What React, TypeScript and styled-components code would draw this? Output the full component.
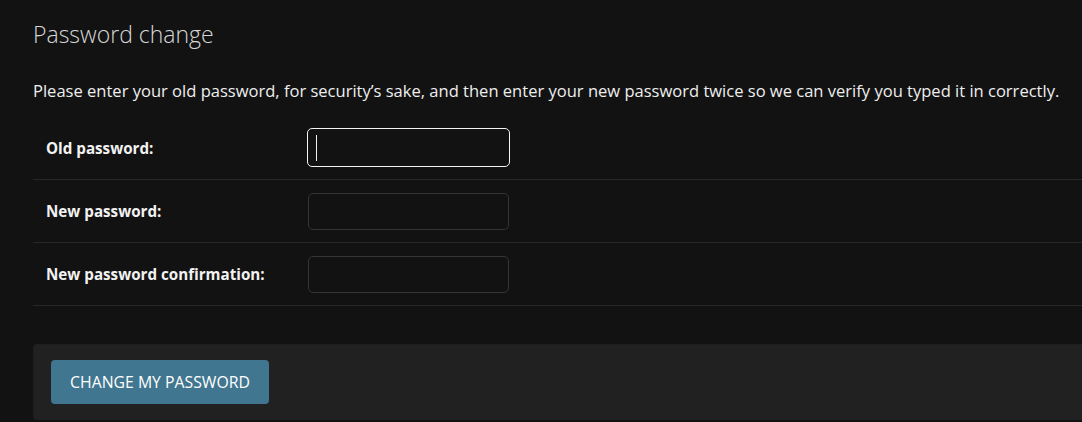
import React from "react";
import styled, { createGlobalStyle } from "styled-components";

const Global = createGlobalStyle`
  html, body { margin: 0; padding: 0; background: #121212; }
  body {
    font-family: "Open Sans", "Noto Sans", "Liberation Sans", sans-serif;
    color: #eeeeee;
    overflow: hidden;
  }
`;

const Content = styled.main`
  padding: 16px 0 0 33px;
  width: 1049px;
`;

const Title = styled.h1`
  margin: 0;
  font-size: 23px;
  line-height: 36px;
  font-weight: 300;
  color: #d6d6d6;
`;

const Intro = styled.p`
  margin: 27px 0 14px;
  font-size: 16.55px;
  line-height: 24px;
  color: #eeeeee;
  white-space: nowrap;
`;

const Fieldset = styled.fieldset`
  margin: 0;
  padding: 0;
  border: none;
`;

const Row = styled.div`
  display: flex;
  align-items: center;
  height: 62px;
  border-bottom: 1px solid #272727;
  padding-left: 13px;
`;

const Label = styled.label`
  width: 262px;
  font-size: 15.2px;
  font-weight: 700;
  color: #f2f2f2;
`;

const FieldBox = styled.div`
  position: relative;
  display: flex;
`;

const Input = styled.input<{ $focused?: boolean }>`
  box-sizing: border-box;
  width: 201px;
  height: 37px;
  margin: ${(p) => (p.$focused ? "-1px 0 0 -1px" : "0")};
  ${(p) => (p.$focused ? "width: 203px; height: 39px;" : "")}
  padding: 0 8px;
  background: #121212;
  color: #eeeeee;
  border: 1px solid ${(p) => (p.$focused ? "#f4f4f4" : "#353535")};
  border-radius: 5px;
  outline: none;
  font: inherit;
`;

const Caret = styled.span`
  position: absolute;
  left: 8px;
  top: 6px;
  width: 1px;
  height: 26px;
  background: #f0f0f0;
`;

const SubmitRow = styled.div`
  margin-top: 38px;
  box-sizing: border-box;
  height: 76px;
  padding: 15px 17px;
  background: #212121;
  border: 1px solid #1e1e1e;
  border-right: none;
  border-radius: 4px 0 0 4px;
`;

const Button = styled.button`
  box-sizing: border-box;
  height: 44px;
  width: 218px;
  padding: 0;
  background: #417690;
  border: none;
  border-radius: 4px;
  color: #ffffff;
  font-family: inherit;
  font-size: 15.8px;
  text-transform: uppercase;
  cursor: pointer;
`;

const fields = [
  { id: "old", label: "Old password:", focused: true },
  { id: "new1", label: "New password:", focused: false },
  { id: "new2", label: "New password confirmation:", focused: false },
];

export default function App() {
  return (
    <>
      <Global />
      <Content>
        <Title>Password change</Title>
        <Intro>
          Please enter your old password, for security’s sake, and then enter your new password
          twice so we can verify you typed it in correctly.
        </Intro>
        <Fieldset>
          {fields.map((f) => (
            <Row key={f.id}>
              <Label htmlFor={f.id}>{f.label}</Label>
              <FieldBox>
                <Input id={f.id} type="password" $focused={f.focused} />
                {f.focused && <Caret />}
              </FieldBox>
            </Row>
          ))}
        </Fieldset>
        <SubmitRow>
          <Button type="submit">Change my password</Button>
        </SubmitRow>
      </Content>
    </>
  );
}
